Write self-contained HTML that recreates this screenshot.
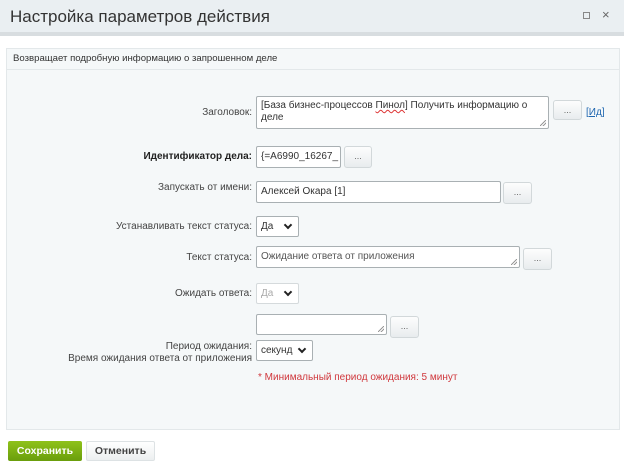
<!DOCTYPE html><html><head><meta charset="utf-8"><style>
*{box-sizing:border-box;margin:0;padding:0}
body{width:624px;height:458px;overflow:hidden;background:#fff;font-family:"Liberation Sans",Arial,sans-serif;position:relative;color:#333}
.a{position:absolute}
.hdr{left:0;top:0;width:624px;height:36px;background:#eaeff2;border-bottom:4px solid #d8dde0}
.ttl{left:10px;top:7px;font-size:17px;color:#333}
.panel{left:6px;top:48px;width:614px;height:382px;background:#f5f8f9;border:1px solid #e3e8ea}
.desc{left:7px;top:49px;width:612px;height:21px;border-bottom:1px solid #e3e8ea;font-size:9.6px;padding:4px 0 0 6px;color:#333}
.lbl{font-size:10px;color:#444;text-align:right;width:240px}
.in{background:#fff;border:1px solid #a9b0b3;border-radius:2px;font-size:10px;padding:0 4px;line-height:20px;color:#333;overflow:hidden;white-space:nowrap}
.btn{border:1px solid #d2d8da;border-radius:3px;background:linear-gradient(#fdfdfd,#e8ecee);font-size:9px;color:#666;text-align:center;line-height:18px}
.sel{background:#fff;border:1px solid #a9b0b3;border-radius:2px;font-size:10px;padding:0 4px;line-height:19px}
.sel:after{content:"";position:absolute;right:7px;top:5px;width:4px;height:4px;border-right:2px solid #222;border-bottom:2px solid #222;transform:rotate(45deg)}
.grip{position:absolute;right:2px;bottom:2px;width:6px;height:6px;background:linear-gradient(135deg,transparent 45%,#999 45%,#999 55%,transparent 55%,transparent 70%,#999 70%,#999 80%,transparent 80%)}
</style></head><body>
<div class="a hdr"></div>
<div class="a ttl">Настройка параметров действия</div>
<div class="a" style="left:583px;top:12px;width:7px;height:7px;border:1px solid #888"></div>
<div class="a" style="left:602px;top:7px;font-size:13px;color:#666">×</div>
<div class="a panel"></div>
<div class="a desc">Возвращает подробную информацию о запрошенном деле</div>

<div class="a lbl" style="left:12px;top:107px">Заголовок:</div>
<div class="a in" style="left:256px;top:96px;width:293px;height:33px;white-space:normal;line-height:12px;padding:3px 4px">[База бизнес-процессов <span style="text-decoration:underline wavy #d33">Пинол</span>] Получить информацию о деле<div class="grip"></div></div>
<div class="a btn" style="left:553px;top:100px;width:29px;height:20px">...</div>
<div class="a" style="left:586px;top:107px;font-size:10px;color:#2067b0">[<u>Ид</u>]</div>

<div class="a lbl" style="left:12px;top:151px;font-weight:bold;color:#222">Идентификатор дела:</div>
<div class="a in" style="left:256px;top:146px;width:85px;height:22px">{=A6990_16267_</div>
<div class="a btn" style="left:344px;top:146px;width:28px;height:22px">...</div>

<div class="a lbl" style="left:12px;top:182px">Запускать от имени:</div>
<div class="a in" style="left:256px;top:181px;width:245px;height:22px">Алексей Окара [1]</div>
<div class="a btn" style="left:503px;top:182px;width:29px;height:22px">...</div>

<div class="a lbl" style="left:12px;top:221px">Устанавливать текст статуса:</div>
<div class="a sel" style="left:256px;top:216px;width:43px;height:21px">Да</div>

<div class="a lbl" style="left:12px;top:252px">Текст статуса:</div>
<div class="a in" style="left:256px;top:246px;width:264px;height:22px;color:#555">Ожидание ответа от приложения<div class="grip"></div></div>
<div class="a btn" style="left:523px;top:248px;width:29px;height:22px">...</div>

<div class="a lbl" style="left:12px;top:288px">Ожидать ответа:</div>
<div class="a sel" style="left:256px;top:283px;width:43px;height:21px;color:#aaa;border-color:#d5dadc">Да</div>

<div class="a in" style="left:256px;top:314px;width:131px;height:21px"><div class="grip"></div></div>
<div class="a btn" style="left:390px;top:316px;width:29px;height:22px">...</div>

<div class="a lbl" style="left:12px;top:341px">Период ожидания:</div>
<div class="a lbl" style="left:12px;top:353px">Время ожидания ответа от приложения</div>
<div class="a sel" style="left:256px;top:340px;width:57px;height:21px">секунд</div>

<div class="a" style="left:258px;top:372px;font-size:10px;color:#d0383d">* Минимальный период ожидания: 5 минут</div>

<div class="a" style="left:8px;top:441px;width:74px;height:20px;background:linear-gradient(#8fc21a,#6a9e0c);border-radius:2px;color:#fff;font-weight:bold;font-size:10.5px;text-align:center;line-height:20px">Сохранить</div>
<div class="a" style="left:86px;top:441px;width:69px;height:20px;background:linear-gradient(#fff,#eceff0);border:1px solid #dde2e4;border-radius:2px;color:#444;font-weight:bold;font-size:10.5px;text-align:center;line-height:18px">Отменить</div>
</body></html>
